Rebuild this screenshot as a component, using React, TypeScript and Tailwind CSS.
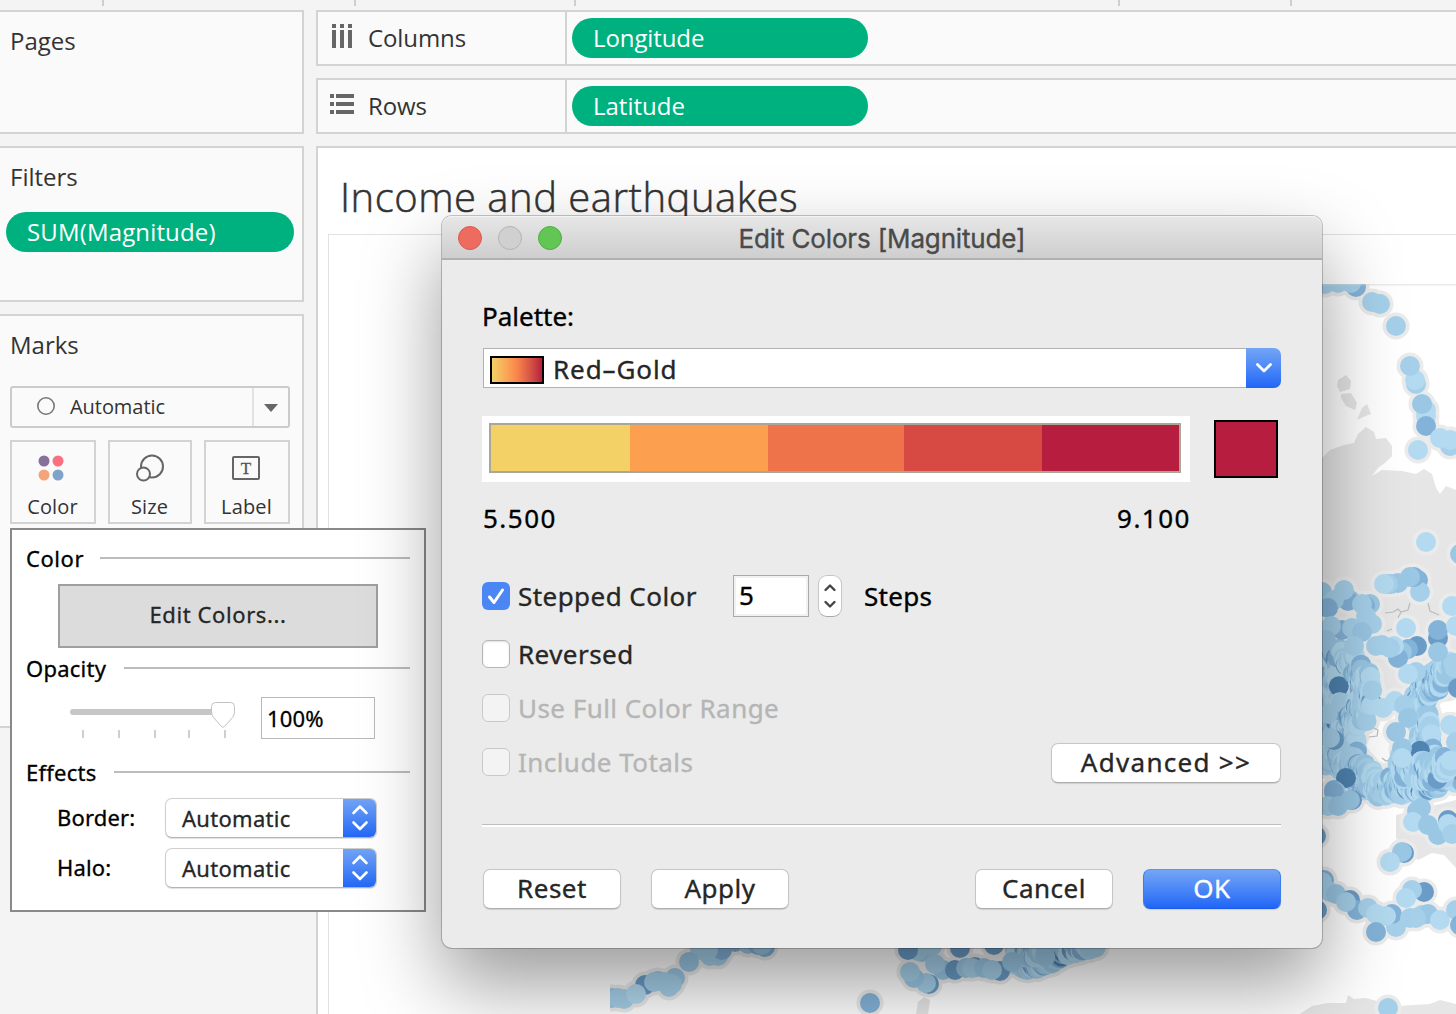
import React from 'react';

type Dot = [x: number, y: number, shade: number];

const SHADES = ['#b3daf0', '#a6d0ea', '#9ac7e4', '#84b3d9', '#6a9cc7', '#4f83b0'];

/** Deterministic pseudo random numbers, so the map is the same on every render. */
function makeRandom(seed: number) {
  let s = seed;
  return () => {
    s = (s * 1664525 + 1013904223) % 4294967296;
    return s / 4294967296;
  };
}

/** Scatters dots along a polyline, within `spread` pixels of it. */
function scatter(path: [number, number][], count: number, spread: number, seed: number): Dot[] {
  const rnd = makeRandom(seed);
  const dots: Dot[] = [];
  for (let i = 0; i < count; i++) {
    const t = rnd() * (path.length - 1);
    const k = Math.floor(t);
    const f = t - k;
    const [x0, y0] = path[k];
    const [x1, y1] = path[k + 1];
    const pick = rnd();
    const shade = pick < 0.3 ? 0 : pick < 0.62 ? 1 : pick < 0.82 ? 2 : pick < 0.93 ? 3 : pick < 0.985 ? 4 : 5;
    dots.push([
      x0 + (x1 - x0) * f + (rnd() - 0.5) * 2 * spread,
      y0 + (y1 - y0) * f + (rnd() - 0.5) * 2 * spread,
      shade,
    ]);
  }
  return dots.sort((a, b) => a[0] - b[0]);
}

const QUAKES: Dot[] = [
  // dense belts
  ...scatter([[1326, 650], [1330, 680], [1332, 720], [1328, 760]], 160, 10, 7),
  ...scatter([[1346, 655], [1366, 680], [1364, 705], [1348, 735], [1350, 752]], 180, 8, 21),
  ...scatter([[1330, 752], [1350, 768], [1374, 786], [1396, 790]], 170, 9, 5),
  ...scatter([[1394, 786], [1420, 784], [1456, 774]], 180, 9, 91),
  ...scatter([[1450, 664], [1434, 682], [1420, 700], [1424, 730], [1428, 760], [1440, 775]], 230, 7, 33),
  ...scatter([[1412, 748], [1406, 770], [1425, 772], [1450, 762]], 110, 10, 47),
  ...scatter([[1012, 964], [1034, 968], [1044, 962], [1062, 954], [1092, 946]], 100, 4, 13),
  ...scatter([[1016, 952], [1045, 952]], 40, 6, 29),
  // north
  [1325, 284, 1], [1356, 287, 3], [1338, 283, 1], [1351, 283, 1], [1380, 304, 1], [1372, 302, 1], [1396, 326, 1],
  [1416, 384, 1], [1415, 380, 0], [1410, 366, 1], [1426, 410, 0], [1426, 416, 0], [1422, 404, 2], [1426, 426, 3],
  [1418, 450, 0], [1450, 446, 1], [1440, 438, 0], [1450, 440, 0], [1426, 542, 0], [1460, 554, 2],
  [1418, 580, 3], [1420, 592, 1], [1414, 577, 3], [1398, 583, 2], [1391, 584, 2], [1388, 584, 1], [1384, 584, 0],
  [1410, 577, 2], [1452, 606, 0],
  [1322, 592, 2], [1350, 600, 2], [1348, 601, 3], [1344, 590, 1], [1334, 600, 1], [1370, 604, 2], [1365, 606, 3],
  [1362, 604, 1], [1366, 616, 1], [1372, 624, 1], [1328, 608, 3], [1342, 630, 3], [1331, 626, 1], [1326, 640, 2],
  [1352, 628, 1], [1362, 632, 2], [1354, 646, 1], [1406, 628, 0], [1438, 638, 4], [1438, 630, 3], [1438, 652, 2],
  [1456, 626, 0], [1417, 646, 4], [1408, 649, 3], [1402, 652, 2], [1398, 658, 3], [1394, 646, 0], [1376, 646, 1],
  [1382, 645, 1], [1390, 648, 1], [1416, 672, 1], [1408, 674, 0], [1458, 688, 4], [1450, 725, 0], [1456, 742, 1],
  [1383, 708, 0], [1395, 701, 0], [1404, 705, 1], [1408, 718, 2], [1396, 732, 2], [1402, 748, 2], [1402, 758, 0],
  [1328, 714, 1], [1334, 740, 4], [1330, 738, 1],
  // south
  [1346, 778, 5], [1334, 790, 3], [1336, 792, 1], [1352, 800, 4], [1334, 792, 3], [1328, 806, 1], [1338, 806, 2],
  [1350, 800, 2], [1421, 808, 2], [1417, 811, 2], [1413, 822, 0], [1428, 825, 2], [1438, 835, 2], [1448, 820, 4],
  [1448, 824, 0], [1452, 834, 1], [1404, 853, 4], [1402, 852, 2], [1390, 862, 0], [1316, 836, 4],
  [1424, 892, 4], [1412, 890, 1], [1406, 898, 0], [1324, 880, 3], [1322, 882, 1], [1330, 892, 1], [1336, 894, 2],
  [1350, 900, 4], [1357, 910, 3], [1346, 902, 1], [1368, 908, 1], [1396, 927, 1], [1392, 914, 3], [1376, 914, 0],
  [1386, 916, 0], [1410, 918, 1], [1422, 915, 1], [1428, 914, 2], [1416, 918, 1], [1440, 920, 0], [1456, 910, 1],
  [1460, 925, 3], [1317, 910, 4], [1376, 932, 3], [1388, 1008, 1],
  // south-west
  [612, 998, 2], [624, 999, 1], [618, 998, 1], [645, 985, 4], [636, 994, 0], [658, 981, 2], [654, 982, 1],
  [669, 987, 1], [675, 978, 2], [672, 984, 1], [664, 982, 1], [710, 956, 1], [718, 956, 1], [722, 950, 3],
  [700, 950, 1], [708, 950, 1], [689, 962, 2], [735, 942, 3], [748, 944, 2], [758, 945, 3], [765, 947, 3],
  [762, 945, 2], [870, 1003, 3],
  [922, 952, 2], [918, 951, 1], [908, 950, 4], [932, 946, 1], [960, 948, 4], [994, 945, 4], [943, 970, 2],
  [935, 964, 1], [929, 984, 4], [926, 983, 1], [914, 978, 2], [910, 972, 1], [975, 967, 4], [955, 970, 4],
  [966, 968, 2], [972, 968, 1], [984, 968, 2], [1000, 971, 4], [992, 970, 1], [1012, 962, 2],
];

function QuakeMap() {
  return (
    <svg width="846" height="730" viewBox="610 284 846 730" className="block shrink-0">
      <g fill="#e6e6e6">
        <path d="M1300 470 L1322 458 L1330 450 L1344 445 L1354 443 L1358 434 L1366 427 L1374 432 L1376 439 L1386 438 L1392 446 L1392 456 L1386 462 L1378 468 L1372 476 L1382 470 L1402 471 L1416 474 L1424 469 L1432 474 L1436 488 L1440 494 L1446 486 L1456 490 L1456 700 L1380 712 L1300 700 Z" />
        <path d="M1338 380 l8 -5 l5 6 l-1 8 l-10 3 l-3 -6 Z M1341 394 l10 -1 l6 10 l-2 7 l-9 -4 l-5 -8 Z M1362 408 l5 -4 l4 10 l-8 3 l-6 3 Z" />
        <path d="M1396 815 L1456 800 L1456 868 L1444 855 L1432 853 L1418 860 L1410 855 L1396 838 Z" />
        <path d="M1300 1014 L1312 1006 L1328 1003 L1346 1003 L1348 995 L1354 999 L1366 998 L1380 1002 L1398 1006 L1430 1004 L1440 1000 L1456 1004 L1456 1014 Z" />
        <path d="M916 1014 L918 1002 L924 997 L930 1000 L928 1014 Z" />
      </g>
      <g fill="#ebebeb">
        {QUAKES.map(([x, y], i) => (
          <circle key={i} cx={x} cy={y} r="13.5" />
        ))}
      </g>
      <path d="M1374 730 L1382 733 L1388 745 L1390 764 L1380 762 L1366 746 Z" fill="#fbfbfb" />
      <path d="M1440 711 L1448 704 L1456 699 L1456 712 Z" fill="#ffffff" />
      <g fill="none" stroke="#bcbcbc" strokeWidth="1.2">
        <path d="M1385 613 l8 -1 l5 -3 l3 3 l7 -2 l2 -7 M1401 612 l-3 6 M1428 603 l2 8 l9 4 M1387 631 l5 -2" />
        <path d="M1371 721 l1 6 l6 3 l-1 6 l-8 1 M1382 758 l4 3 l3 -1" />
      </g>
      <g>
        {QUAKES.map(([x, y, s], i) => (
          <circle key={i} cx={x} cy={y} r="10" fill={SHADES[s]} />
        ))}
      </g>
      <rect x="610" y="284" width="846" height="1.5" fill="#d8d8d8" fillOpacity="0.5" />
    </svg>
  );
}

function Pill({ children, className }: { children: React.ReactNode; className: string }) {
  return (
    <div className={`flex h-10 items-center rounded-full bg-[#00b180] pb-px pl-[21px] text-[24px] leading-none text-white ${className}`}>
      {children}
    </div>
  );
}

function Shelf({ icon, label, field }: { icon: React.ReactNode; label: string; field: React.ReactNode }) {
  return (
    <div className="flex h-14 border-2 border-r-0 border-[#d3d3d3] bg-[#fafafa]">
      <div className="flex w-[249px] shrink-0 items-center border-r-2 border-[#d3d3d3] pl-3">
        {icon}
        <span className="ml-[14px] text-[24px] leading-none tracking-[-0.1px] text-[#333]">{label}</span>
      </div>
      <div className="flex items-center pl-[5px]">{field}</div>
    </div>
  );
}

function MarkButton({ label, width, children }: { label: string; width: string; children: React.ReactNode }) {
  return (
    <div className={`flex h-[84px] flex-col items-center border-2 border-[#d3d3d3] bg-[#fafafa] ${width}`}>
      <div className="flex h-[52px] items-center justify-center">{children}</div>
      <span className="-ml-px text-[20px] leading-[25px] tracking-[0.15px] text-[#333]">{label}</span>
    </div>
  );
}

function SectionTitle({ title, className, gap }: { title: string; className: string; gap: string }) {
  return (
    <div className={`flex items-center pl-3.5 pr-3.5 ${className}`}>
      <span className="text-[22px] leading-none text-black">{title}</span>
      <div className={`h-0.5 flex-1 bg-[#bcbcbc] ${gap}`} />
    </div>
  );
}

function EffectSelect({ label }: { label: string }) {
  return (
    <div className="flex h-10 items-center pl-[45px]">
      <span className="w-[108px] pb-0.5 text-[22px] leading-none tracking-[0.15px] text-black">{label}</span>
      <div className="flex h-10 w-[212px] overflow-hidden rounded-[7px] border border-[#cfcfcf] border-b-[#b3b3b3] bg-white shadow-[0_1px_1px_rgba(0,0,0,0.12)]">
        <span className="flex flex-1 items-center pl-4 text-[22px] leading-none tracking-[0.3px] text-[#262626]">Automatic</span>
        <div className="-my-px -mr-px flex w-[34px] items-center justify-center bg-linear-to-b from-[#74a5f5] to-[#2065f6]">
          <svg width="18" height="28" viewBox="0 0 18 28" fill="none" stroke="white" strokeWidth="2.6" strokeLinecap="round" strokeLinejoin="round">
            <path d="M2.500 9 L9 2.500 L15.500 9 M2.500 18.500 L9 25 L15.500 18.500" />
          </svg>
        </div>
      </div>
    </div>
  );
}

function ColorPopup() {
  return (
    <div className="absolute left-[10px] top-[528px] h-[384px] w-[416px] border-2 border-[#898989] bg-white font-['Noto_Sans',sans-serif] [-webkit-text-stroke:0.3px]">
      <SectionTitle title="Color" className="h-[54px] pt-0.5 tracking-[0.55px]" gap="ml-4" />
      <div className="ml-[46px] flex h-16 w-80 items-center justify-center border-2 border-[#9f9f9f] bg-[#dcdcdc] pb-1 text-[22px] leading-none tracking-[0.6px] text-[#262626]">
        Edit Colors...
      </div>
      <SectionTitle title="Opacity" className="h-10 tracking-[0.25px]" gap="ml-[18px]" />
      <div className="mt-[9px] flex h-[42px]">
        <svg width="172" height="44" viewBox="66 697 172 44" className="ml-[54px] shrink-0">
          <rect x="70" y="709" width="160" height="6" rx="3" fill="#c6c6c6" />
          <path d="M82 730h2v8h-2z M118 730h2v8h-2z M154 730h2v8h-2z M188 730h2v8h-2z M224 730h2v8h-2z" fill="#cfcfcf" />
          <path d="M215.500 702.500 H230.500 Q234.500 702.500 234.500 706.500 V712 Q234.500 715 232.500 717.500 L224.500 726.500 Q223 728 221.500 726.500 L213.500 717.500 Q211.500 715 211.500 712 V706.500 Q211.500 702.500 215.500 702.500 Z" fill="white" stroke="#c2c2c2" />
        </svg>
        <div className="ml-[23px] flex w-[114px] items-center border border-[#b9b9b9] bg-white pl-[5px] text-[22px] leading-none tracking-[0.2px] text-black">
          100%
        </div>
      </div>
      <SectionTitle title="Effects" className="h-[59px] pt-[7px] tracking-[0.25px]" gap="ml-[17px]" />
      <div className="flex flex-col gap-2.5">
        <EffectSelect label="Border:" />
        <EffectSelect label="Halo:" />
      </div>
    </div>
  );
}

function DialogButton({ label, width, className = '', primary = false }: { label: string; width: string; className?: string; primary?: boolean }) {
  const look = primary
    ? 'border-t-[#5f93ee] border-x-[#3f7bee] border-b-[#1c5ce6] bg-linear-to-b from-[#74a5f5] to-[#2065f6] text-white'
    : 'border-[#c6c6c6] border-b-[#adadad] bg-white text-[#262626]';
  return (
    <div className={`flex h-10 shrink-0 items-center justify-center rounded-[7px] border pb-0.5 text-[26px] leading-none shadow-[0_1px_1px_rgba(0,0,0,0.12)] ${className || 'tracking-[0.5px]'} ${look} ${width}`}>
      {label}
    </div>
  );
}

function Check({ label, checked = false, disabled = false }: { label: string; checked?: boolean; disabled?: boolean }) {
  const box = checked
    ? 'bg-[#4a87f5]'
    : disabled
      ? 'border border-[#c9c9c9] bg-[#f3f3f3]'
      : 'border border-[#b5b5b5] bg-white shadow-[inset_0_1px_2px_rgba(0,0,0,0.12)]';
  return (
    <div className="flex h-7 items-center">
      <div className={`flex size-7 items-center justify-center rounded-[6px] ${box}`}>
        {checked && (
          <svg width="28" height="28" viewBox="0 0 28 28" fill="none" stroke="white" strokeWidth="3" strokeLinecap="round" strokeLinejoin="round">
            <path d="M7.500 15 L12 20.500 L20.500 8" />
          </svg>
        )}
      </div>
      <span className={`ml-2 whitespace-nowrap text-[26px] leading-none tracking-[0.45px] ${disabled ? 'text-[#b5b5b5]' : 'text-[#262626]'}`}>
        {label}
      </span>
    </div>
  );
}

function EditColorsDialog() {
  return (
    <div className="absolute left-[442px] top-[216px] h-[732px] w-[880px] rounded-[10px] bg-[#ebebeb] font-['Noto_Sans',sans-serif] [-webkit-text-stroke:0.35px] shadow-[0_0_0_1px_rgba(0,0,0,0.22),0_36px_80px_rgba(0,0,0,0.4)]">
      <div className="grid h-11 grid-cols-[1fr_auto_1fr] items-center rounded-t-[10px] border-b-2 border-[#b0b0b0] bg-linear-to-b from-[#e7e7e7] to-[#cecece] shadow-[inset_0_1px_0_#f3f3f3]">
        <div className="flex gap-4 pl-4 pt-0.5">
          <div className="size-6 rounded-full border border-[#dc5a50] bg-[#ee6b60]" />
          <div className="size-6 rounded-full border border-[#b4b4b4] bg-[#d0d0d0]" />
          <div className="size-6 rounded-full border border-[#4fae42] bg-[#62c655]" />
        </div>
        <div className="pt-1 font-['Inter',sans-serif] text-[26px] leading-none tracking-[-0.15px] text-[#4a4a4a]">Edit Colors [Magnitude]</div>
      </div>

      <div className="pl-10 pr-[41px] pt-[38px]">
        <div className="flex h-9 items-center text-[26px] leading-none text-black">Palette:</div>

        <div className="ml-px mt-3.5 flex h-10">
          <div className="flex flex-1 items-center border border-r-0 border-[#b1b1b1] bg-white pl-1.5">
            <div className="mt-1 h-7 w-[54px] border-2 border-black bg-linear-to-r from-[#f4d166] via-[#f9854b] via-50% to-[#b71d3e]" />
            <span className="ml-[9px] pt-0.5 text-[26px] leading-none tracking-[0.9px] text-[#262626]">Red–Gold</span>
          </div>
          <div className="flex w-[35px] items-center justify-center rounded-r-[7px] bg-linear-to-b from-[#74a5f5] to-[#2065f6]">
            <svg width="18" height="12" viewBox="0 0 18 12" fill="none" stroke="white" strokeWidth="2.8" strokeLinecap="round" strokeLinejoin="round">
              <path d="M2.500 2.500 L9 9 L15.500 2.500" />
            </svg>
          </div>
        </div>

        <div className="mt-7 flex items-center">
          <div className="h-[66px] w-[708px] bg-white p-[7px] pb-[9px] pr-[9px]">
            <div className="flex h-[50px] border-2 border-[#a9a898]">
              <div className="w-[139px] bg-[#f4d166]" />
              <div className="w-[138px] bg-[#fca04f]" />
              <div className="w-[136px] bg-[#ef734a]" />
              <div className="w-[138px] bg-[#d64a43]" />
              <div className="flex-1 bg-[#b71d3e]" />
            </div>
          </div>
          <div className="ml-6 h-[58px] w-16 border-2 border-black bg-[#b71d3e]" />
        </div>

        <div className="flex h-[72px] w-[708px] items-center justify-between text-[26px] leading-none tracking-[1.5px] text-black">
          <span className="ml-px">5.500</span>
          <span className="-mr-px">9.100</span>
        </div>

        <div className="mt-[21px] flex h-[42px] items-center">
          <div className="w-[251px]">
            <Check label="Stepped Color" checked />
          </div>
          <div className="flex h-[42px] w-[76px] items-center border border-[#a9a9a9] bg-white pb-0.5 pl-[5px] text-[26px] leading-none text-black shadow-[inset_0_0_0_2px_#f1f1f1]">
            5
          </div>
          <div className="ml-[9px] flex h-[42px] w-6 items-center justify-center rounded-[9px] border border-[#c6c6c6] border-b-[#a9a9a9] bg-white">
            <svg width="14" height="28" viewBox="0 0 14 28" fill="none" stroke="#444" strokeWidth="2.4" strokeLinecap="round" strokeLinejoin="round">
              <path d="M2.500 8 L7 3.500 L11.500 8 M2.500 20 L7 24.500 L11.500 20" />
            </svg>
          </div>
          <span className="ml-[22px] text-[26px] leading-none tracking-[0.3px] text-black">Steps</span>
        </div>

        <div className="mt-[23px]">
          <Check label="Reversed" />
        </div>
        <div className="mt-[26px]">
          <Check label="Use Full Color Range" disabled />
        </div>
        <div className="mt-[21px] flex h-10 items-start justify-between">
          <div className="pt-[5px]">
            <Check label="Include Totals" disabled />
          </div>
          <DialogButton label="Advanced >>" width="w-[230px]" className="tracking-[1.3px]" />
        </div>

        <div className="mt-[41px] h-[3px] border-t border-[#bdbdbd] bg-white" />

        <div className="ml-px mt-[42px] flex">
          <DialogButton label="Reset" width="w-[138px]" />
          <div className="ml-[30px]">
            <DialogButton label="Apply" width="w-[138px]" />
          </div>
          <div className="ml-auto flex gap-[30px]">
            <DialogButton label="Cancel" width="w-[138px]" />
            <DialogButton label="OK" width="w-[138px]" primary />
          </div>
        </div>
      </div>
    </div>
  );
}

export default function App() {
  return (
    <div className="relative flex h-[1014px] w-[1456px] flex-col overflow-hidden bg-[#f4f4f4] font-['Open_Sans',sans-serif] text-[#333]">
      <div className="flex h-2.5 shrink-0 pl-[102px]">
        <div className="mr-[250px] h-1.5 w-0.5 bg-[#cfcfcf]" />
        <div className="mr-[218px] h-1.5 w-0.5 bg-[#cfcfcf]" />
        <div className="mr-[542px] h-1.5 w-0.5 bg-[#cfcfcf]" />
        <div className="mr-[170px] h-1.5 w-0.5 bg-[#cfcfcf]" />
        <div className="h-1.5 w-0.5 bg-[#cfcfcf]" />
      </div>

      <div className="flex flex-1 gap-3">
        <div className="flex w-[304px] shrink-0 flex-col gap-3">
          <div className="h-[124px] border-2 border-l-0 border-[#d3d3d3] bg-[#fafafa] pl-2.5 pt-3">
            <div className="text-[24px] leading-[33px]">Pages</div>
          </div>

          <div className="h-[156px] border-2 border-l-0 border-[#d3d3d3] bg-[#fafafa] pl-1.5 pt-3">
            <div className="pl-1 text-[24px] leading-[33px]">Filters</div>
            <Pill className="mt-[19px] w-72 tracking-[0.15px]">SUM(Magnitude)</Pill>
          </div>

          <div className="h-[414px] border-2 border-l-0 border-[#d3d3d3] bg-[#fafafa] pl-2.5 pt-3">
            <div className="text-[24px] leading-[33px]">Marks</div>
            <div className="mt-[25px] flex h-[42px] w-[280px] items-center rounded-[3px] border-2 border-[#cbcbcb]">
              <svg width="20" height="20" viewBox="0 0 20 20" className="ml-6 mb-0.5">
                <circle cx="10" cy="10" r="8.2" fill="none" stroke="#777" strokeWidth="1.6" />
              </svg>
              <span className="ml-[14px] flex-1 text-[20px] leading-none tracking-[-0.05px]">Automatic</span>
              <div className="flex h-full w-9 items-center justify-center border-l-2 border-[#e2e2e2]">
                <svg width="14" height="8" viewBox="0 0 14 8" className="mt-0.5">
                  <path d="M0 0h14L7 8z" fill="#666" />
                </svg>
              </div>
            </div>
            <div className="mt-3 flex gap-3">
              <MarkButton label="Color" width="w-[86px]">
                <svg width="26" height="26" viewBox="0 0 26 26" className="-ml-1 -mt-px">
                  <circle cx="6" cy="6" r="5.500" fill="#857199" />
                  <circle cx="20" cy="6" r="5.500" fill="#fa7080" />
                  <circle cx="6" cy="20" r="5.500" fill="#f2a57b" />
                  <circle cx="20" cy="20" r="5.500" fill="#80a3ca" />
                </svg>
              </MarkButton>
              <MarkButton label="Size" width="w-[84px]">
                <svg width="28" height="28" viewBox="0 0 28 28" fill="#fafafa" stroke="#666" strokeWidth="2">
                  <circle cx="16" cy="12.500" r="11" />
                  <circle cx="7.500" cy="20" r="6.500" />
                </svg>
              </MarkButton>
              <MarkButton label="Label" width="w-[86px]">
                <div className="-ml-0.5 flex h-6 w-7 items-center justify-center rounded-[2px] border-2 border-[#666] font-['Liberation_Serif',serif] text-[17px] leading-none text-[#555] [-webkit-text-stroke:0.3px]">
                  T
                </div>
              </MarkButton>
            </div>
          </div>
        </div>

        <div className="flex min-w-0 flex-1 flex-col gap-3">
          <Shelf
            label="Columns"
            icon={
              <svg width="24" height="24" viewBox="0 0 24 24" className="mb-1 ml-0.5 mr-[-2px]" fill="#666">
                <path d="M0 0h4v4H0z M8 0h4v4H8z M16 0h4v4h-4z M0 6h4v18H0z M8 6h4v18H8z M16 6h4v18h-4z" />
              </svg>
            }
            field={<Pill className="w-[296px] tracking-[-0.1px]">Longitude</Pill>}
          />
          <Shelf
            label="Rows"
            icon={
              <svg width="24" height="20" viewBox="0 0 24 20" className="mb-1" fill="#666">
                <path d="M0 0h4v4H0z M0 8h4v4H0z M0 16h4v4H0z M6 0h18v4H6z M6 8h18v4H6z M6 16h18v4H6z" />
              </svg>
            }
            field={<Pill className="w-[296px]">Latitude</Pill>}
          />

          <div className="h-[868px] overflow-hidden border-l-2 border-t-2 border-[#d3d3d3] bg-white">
            <div className="flex h-[86px] items-center pl-[22px] pt-[11px] text-[40px] font-light leading-none tracking-[0.5px] [-webkit-text-stroke:0.5px]">
              Income and earthquakes
            </div>
            <div className="ml-2.5 border-l border-t border-[#e2e2e2] pl-[281px] pt-[49px]">
              <QuakeMap />
            </div>
          </div>
        </div>
      </div>

      <ColorPopup />
      <EditColorsDialog />
    </div>
  );
}
